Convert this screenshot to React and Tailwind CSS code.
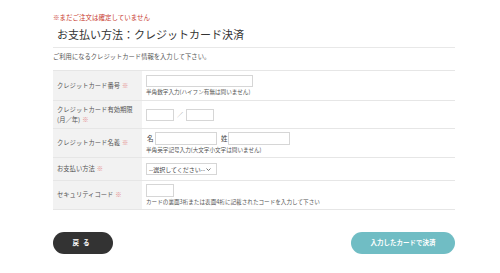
import React from 'react';

const font = { fontFamily: '"Noto Sans CJK JP", "Liberation Sans", sans-serif' };

const Req = () => <span className="text-[#e58a8a] ml-[2px]">※</span>;

const Row = ({ label, h, children }) => (
  <div className={`flex border-b border-[#e6e6e6] ${h}`}>
    <div className="w-[89px] shrink-0 bg-[#f2f2f2] flex items-center pl-[4px] text-[6.3px] leading-[10px] text-[#555]">
      <div>{label}</div>
    </div>
    <div className="flex-1 flex flex-col justify-center pl-[4px]">{children}</div>
  </div>
);

const Input = ({ w }) => (
  <div className={`h-[12px] ${w} border border-[#d6d6d6] bg-white`} />
);

const Hint = ({ children }) => (
  <div className="text-[5.6px] leading-[8px] text-[#555] mt-[1px]">{children}</div>
);

export default function App() {
  return (
    <div className="w-[500px] h-[273px] bg-white overflow-hidden" style={font}>
      <div className="ml-[53px] w-[402px] pt-[12px]">
        <div className="text-[6.5px] leading-[10px] text-[#c83a2e]">※まだご注文は確定していません</div>
        <div className="border-b border-[#e8e8e8] pl-[4px] pt-[4px] pb-[5px]">
          <h1 className="text-[11px] leading-[16px] text-[#333]">お支払い方法：クレジットカード決済</h1>
        </div>
        <div className="text-[6.3px] leading-[10px] text-[#555] mt-[4px]">ご利用になるクレジットカード情報を入力して下さい。</div>
        <div className="mt-[8px] border-t border-[#e6e6e6]">
          <Row label={<>クレジットカード番号<Req /></>} h="h-[30px]">
            <Input w="w-[107px]" />
            <Hint>半角数字入力(ハイフン有無は問いません)</Hint>
          </Row>
          <Row label={<>クレジットカード有効期限<br />(月／年)<Req /></>} h="h-[28px]">
            <div className="flex items-center">
              <Input w="w-[28px]" />
              <span className="text-[6px] text-[#777] mx-[3px]">／</span>
              <Input w="w-[28px]" />
            </div>
          </Row>
          <Row label={<>クレジットカード名義<Req /></>} h="h-[29px]">
            <div className="flex items-center text-[6.5px] text-[#444]">
              <span className="w-[9px] pl-[1px]">名</span>
              <div className="h-[13px] w-[62px] border border-[#d6d6d6]" />
              <span className="w-[11px] pl-[4px]">姓</span>
              <div className="h-[13px] w-[62px] border border-[#d6d6d6]" />
            </div>
            <Hint>半角英字記号入力(大文字小文字は問いません)</Hint>
          </Row>
          <Row label={<>お支払い方法<Req /></>} h="h-[23px]">
            <div className="h-[12px] w-[71px] border border-[#d6d6d6] flex items-center pl-[2px] text-[6px] text-[#444]">
              --選択してください--
              <svg className="ml-[1px]" width="5" height="5" viewBox="0 0 10 10">
                <path d="M1 3 L5 7 L9 3" fill="none" stroke="#555" strokeWidth="1.6" />
              </svg>
            </div>
          </Row>
          <Row label={<>セキュリティコード<Req /></>} h="h-[29px]">
            <div className="h-[13px] w-[28px] border border-[#d6d6d6]" />
            <Hint>カードの裏面3桁または表面4桁に記載されたコードを入力して下さい</Hint>
          </Row>
        </div>
        <div className="mt-[22px] flex justify-between">
          <button className="w-[60px] h-[22px] rounded-full bg-[#333] text-white text-[6.5px] font-bold tracking-[4px]">戻る</button>
          <button className="w-[104px] h-[22px] rounded-full bg-[#70bdc4] text-white text-[6.5px] font-bold">入力したカードで決済</button>
        </div>
      </div>
    </div>
  );
}
